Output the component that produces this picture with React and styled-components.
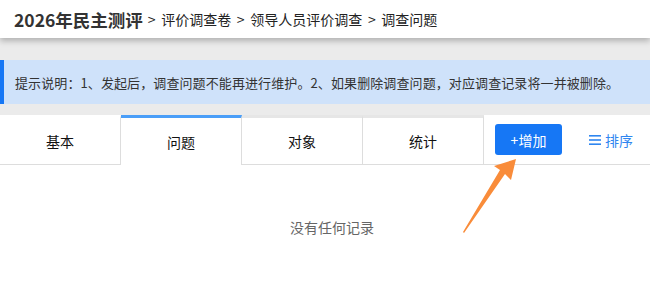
import React from "react";
import styled, { createGlobalStyle } from "styled-components";

const Global = createGlobalStyle`
  html, body { margin: 0; padding: 0; background: #ebebeb; }
  body { font-family: "Noto Sans CJK SC", "Noto Sans", sans-serif; color: #333; }
`;

const Page = styled.div`
  width: 650px;
  height: 283px;
  overflow: hidden;
  position: relative;
  background: #ebebeb;
`;

const Header = styled.div`
  height: 38px;
  background: #fff;
  display: flex;
  align-items: center;
  padding-left: 14px;
  box-shadow: 0 3px 6px rgba(0, 0, 0, 0.25);
  position: relative;
  z-index: 1;
`;

const Title = styled.span`
  font-size: 17.5px;
  font-weight: bold;
  color: #333;
`;

const Crumb = styled.span`
  font-size: 14px;
  color: #222;
  margin-left: 5px;
  word-spacing: 2.5px;
`;

const Alert = styled.div`
  margin-top: 22px;
  height: 44px;
  background: #cfe2fa;
  border-left: 4px solid #1677f5;
  display: flex;
  align-items: center;
  padding-left: 11px;
  font-size: 13px;
  letter-spacing: 0.1px;
  color: #333;
`;

const Body = styled.div`
  margin-top: 11px;
  background: #fff;
  height: 168px;
`;

const TabRow = styled.div`
  display: flex;
  align-items: stretch;
  height: 50px;
  border-bottom: 1px solid #ddd;
  box-sizing: border-box;
`;

const Tab = styled.div`
  width: 121px;
  box-sizing: border-box;
  border-right: 1px solid #ddd;
  border-top: 3px solid ${p => (p.active ? "#4a9ef8" : "#e6e6e6")};
  display: flex;
  align-items: center;
  justify-content: center;
  font-size: 14px;
  color: #111;
  background: #fff;
  margin-bottom: ${p => (p.active ? "-1px" : "0")};
  ${p => p.first && "border-top-color: #fff;"}
`;

const Tools = styled.div`
  flex: 1;
  display: flex;
  align-items: center;
  padding-left: 11px;
`;

const AddButton = styled.button`
  width: 67px;
  height: 31px;
  background: #1677f5;
  color: #fff;
  border: none;
  border-radius: 3px;
  font-family: inherit;
  font-size: 14px;
  padding: 0;
`;

const SortLink = styled.span`
  margin-left: 27px;
  display: flex;
  align-items: center;
  gap: 4px;
  color: #2f86f0;
  font-size: 14px;
`;

const Empty = styled.div`
  text-align: center;
  padding-top: 52px;
  padding-left: 14px;
  font-size: 14px;
  color: #666;
`;

const Arrow = styled.svg`
  position: absolute;
  left: 455px;
  top: 155px;
`;

function App() {
  return (
    <Page>
      <Global />
      <Header>
        <Title>2026年民主测评</Title>
        <Crumb>&gt; 评价调查卷 &gt; 领导人员评价调查 &gt; 调查问题</Crumb>
      </Header>
      <Alert>提示说明：1、发起后，调查问题不能再进行维护。2、如果删除调查问题，对应调查记录将一并被删除。</Alert>
      <Body>
        <TabRow>
          <Tab first>基本</Tab>
          <Tab active>问题</Tab>
          <Tab>对象</Tab>
          <Tab>统计</Tab>
          <Tools>
            <AddButton>+增加</AddButton>
            <SortLink>
              <svg width="12" height="12" viewBox="0 0 12 12">
                <rect x="0" y="1" width="12" height="1.6" fill="#2f86f0" />
                <rect x="0" y="5.2" width="12" height="1.6" fill="#2f86f0" />
                <rect x="0" y="9.4" width="12" height="1.6" fill="#2f86f0" />
              </svg>
              排序
            </SortLink>
          </Tools>
        </TabRow>
        <Empty>没有任何记录</Empty>
      </Body>
      <Arrow width="70" height="85" viewBox="0 0 70 85">
        <polygon points="61,4 56,25 50,19 9,78 8,77 45,15 39,11" fill="#f98c3a" />
      </Arrow>
    </Page>
  );
}

export default App;
